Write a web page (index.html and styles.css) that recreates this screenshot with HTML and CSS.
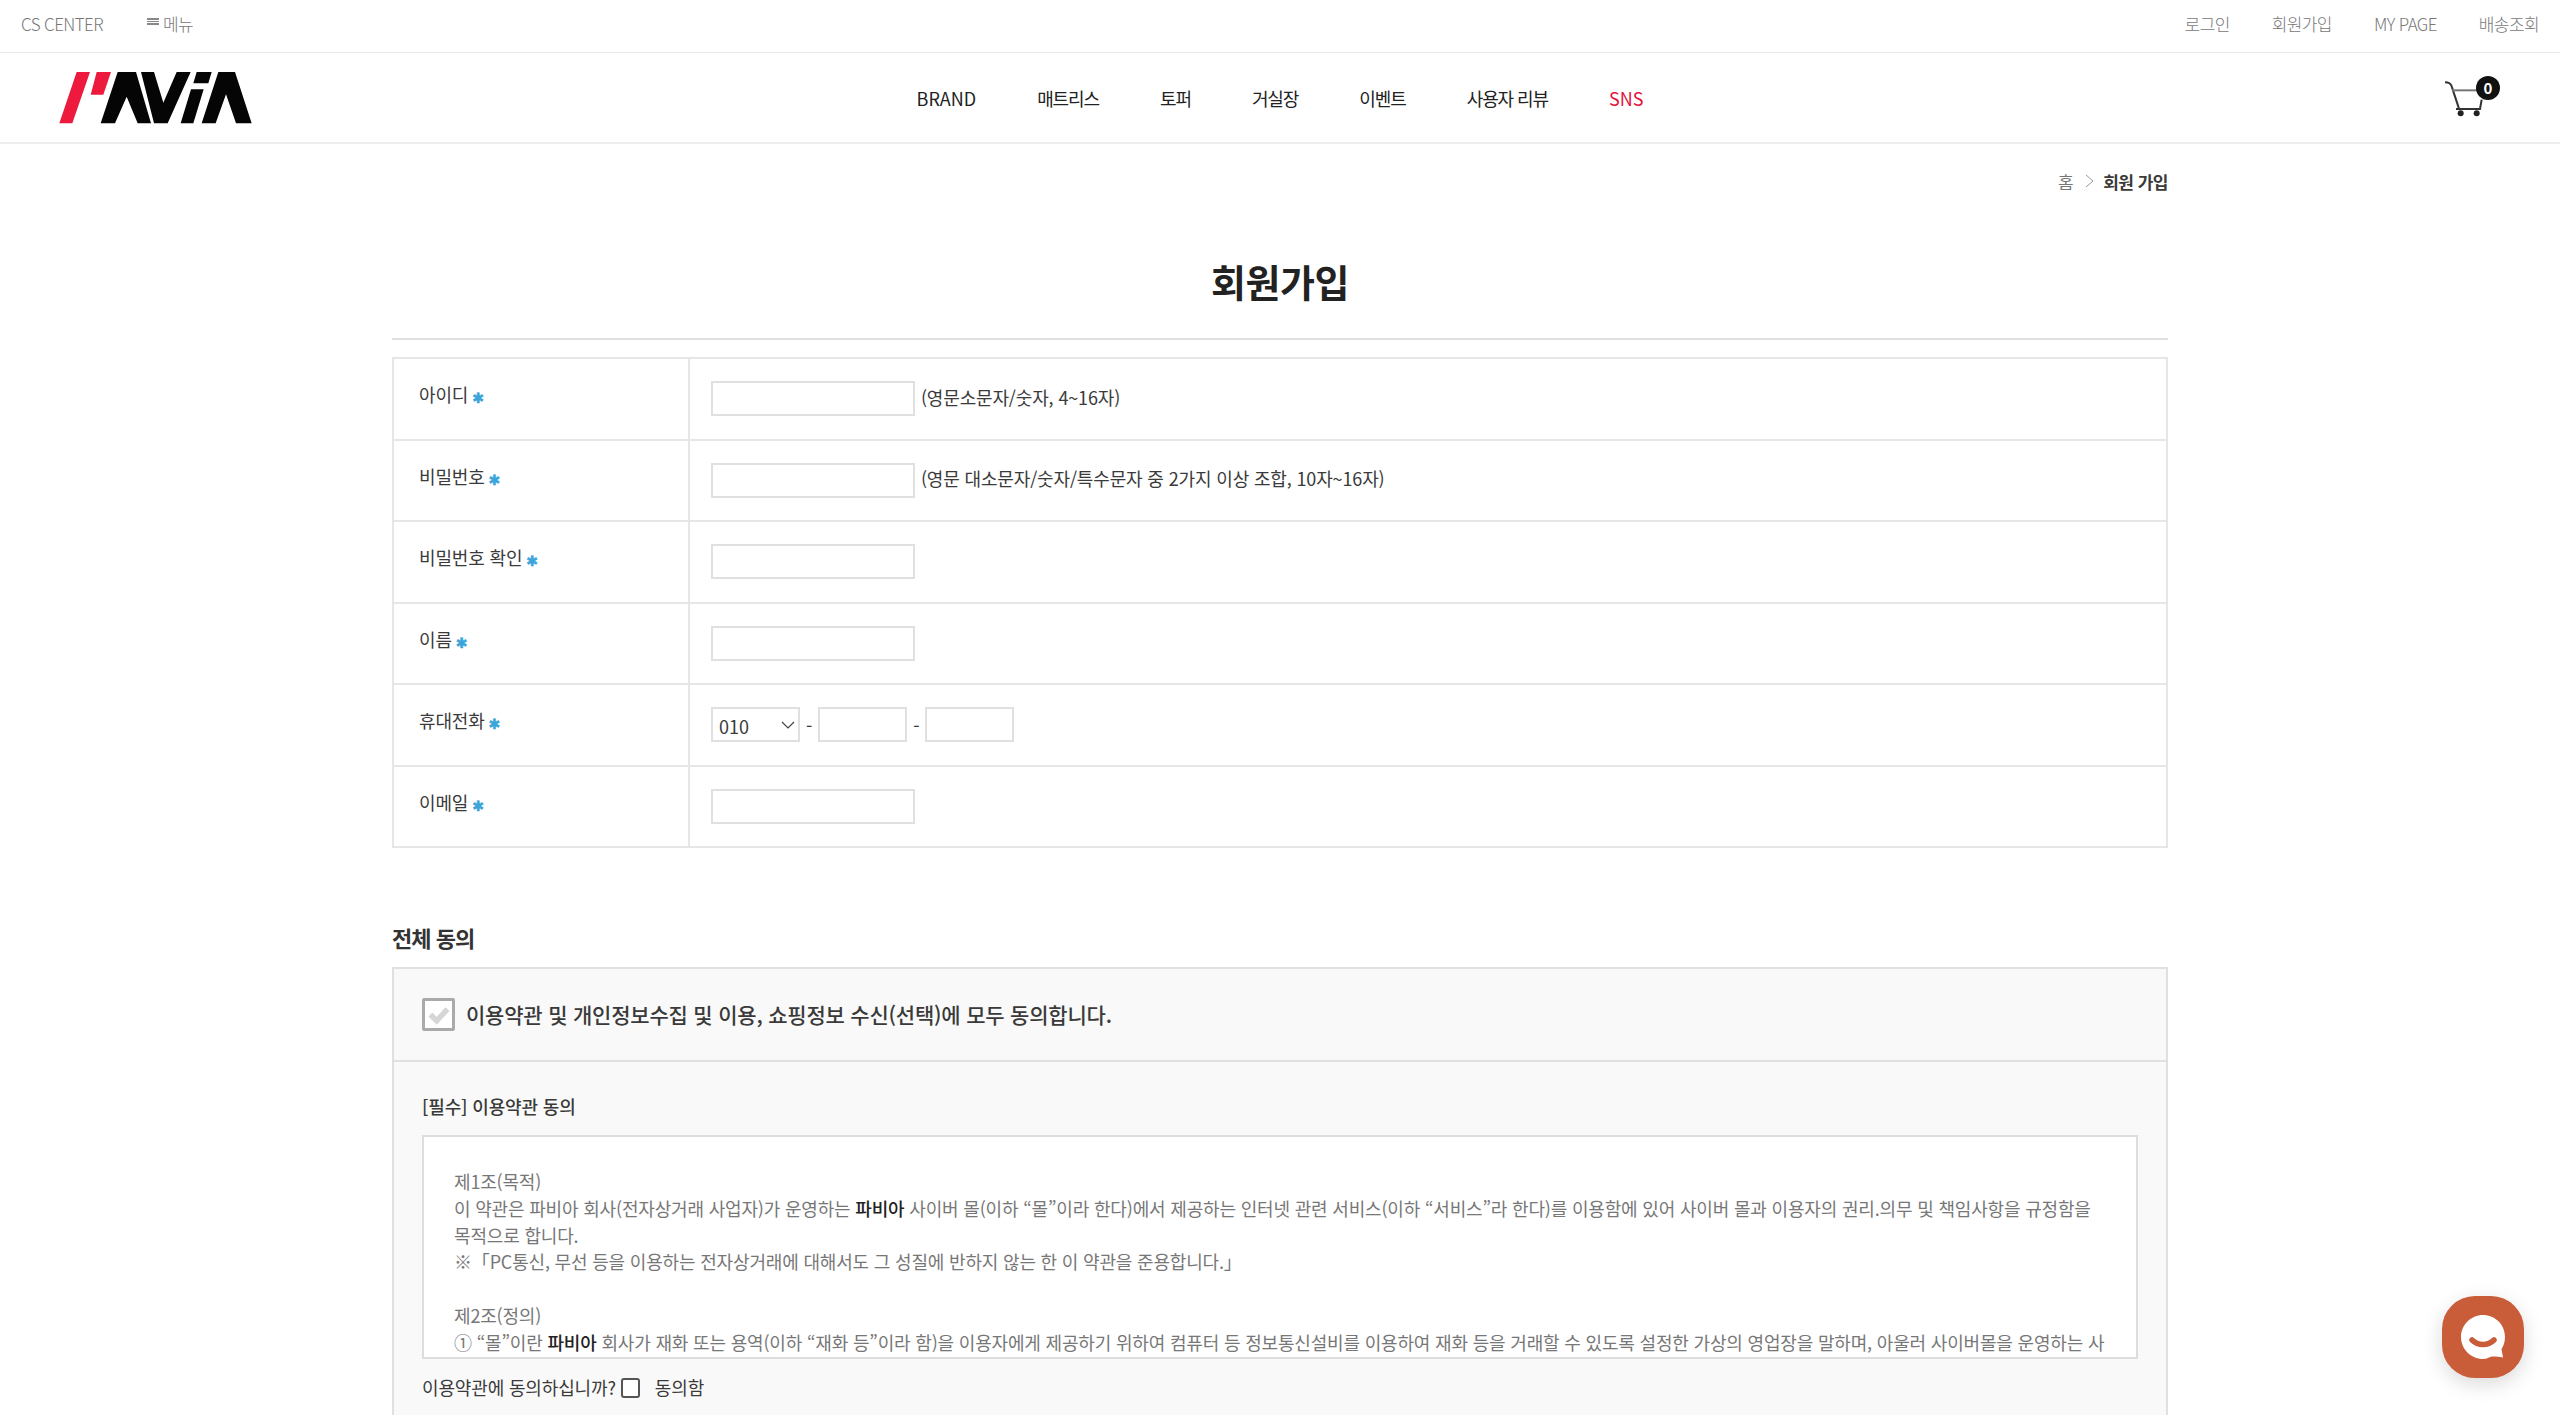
FILE: index.html
```html
<!DOCTYPE html>
<html lang="ko">
<head>
  <meta charset="UTF-8">
  <meta name="viewport" content="width=device-width, initial-scale=1.0">
  <link rel="stylesheet" href="styles.css">
  <title>회원 가입</title>
</head>
<body>
  <div class="page">
    <div class="top-bar">
      <div class="top-links">
        <a>CS CENTER</a>
        <a class="menu-link"><span class="menu-icon"></span>메뉴</a>
      </div>
      <div class="top-links top-links-right">
        <a>로그인</a>
        <a>회원가입</a>
        <a>MY PAGE</a>
        <a>배송조회</a>
      </div>
    </div>

    <header class="header">
      <svg class="logo" viewBox="0 0 600 192" width="200" height="64" aria-label="PAVIA">
        <path fill="#ed1a3d" d="M65 18H105L52 172H13ZM125 18H168L145 86H107Z"/>
        <path fill="#050505" d="M188 18H243L288 172H248L215 92L180 172H137ZM258 18H297L325 110L365 18H407L338 172H297ZM408 70H446L415 172H377ZM425 18H470L460 52H415ZM490 18H540L590 172H543L513 85L482 172H440Z"/>
      </svg>
      <nav class="nav">
        <a class="nav-latin">BRAND</a>
        <a>매트리스</a>
        <a>토퍼</a>
        <a>거실장</a>
        <a>이벤트</a>
        <a>사용자 리뷰</a>
        <a class="nav-latin nav-sns">SNS</a>
      </nav>
      <div class="cart">
        <svg viewBox="0 0 240 162" width="80" height="54">
          <g fill="none" stroke="#333" stroke-width="6">
            <path d="M45 40C56 40 62 42 65 52L88 122"/>
            <path stroke="#777" d="M66 64H148"/>
            <path d="M155 92L150 120H78"/>
          </g>
          <circle cx="92" cy="133" r="9" fill="#222"/>
          <circle cx="140" cy="133" r="9" fill="#222"/>
        </svg>
        <span class="cart-count">0</span>
      </div>
    </header>

    <main class="content">
      <div class="breadcrumb">
        <span>홈</span>
        <svg viewBox="0 0 10 14" width="10" height="14"><path d="M1 1L8 7L1 13" fill="none" stroke="#999" stroke-width="1"/></svg>
        <strong>회원 가입</strong>
      </div>

      <h1 class="page-title">회원가입</h1>

      <table class="join-table">
        <tr>
          <th>아이디 <span class="req">✱</span></th>
          <td><input type="text" class="field"> <span class="hint">(영문소문자/숫자, 4~16자)</span></td>
        </tr>
        <tr>
          <th>비밀번호 <span class="req">✱</span></th>
          <td><input type="password" class="field"> <span class="hint">(영문 대소문자/숫자/특수문자 중 2가지 이상 조합, 10자~16자)</span></td>
        </tr>
        <tr>
          <th>비밀번호 확인 <span class="req">✱</span></th>
          <td><input type="password" class="field"></td>
        </tr>
        <tr>
          <th>이름 <span class="req">✱</span></th>
          <td><input type="text" class="field"></td>
        </tr>
        <tr>
          <th>휴대전화 <span class="req">✱</span></th>
          <td>
            <div class="phone">
              <div class="select-wrap">
                <select class="phone-select"><option>010</option></select>
                <svg viewBox="0 0 14 8" width="14" height="8"><path d="M1 1L7 7L13 1" fill="none" stroke="#444" stroke-width="1.2"/></svg>
              </div>
              <span>-</span>
              <input type="text" class="field field-short">
              <span>-</span>
              <input type="text" class="field field-short">
            </div>
          </td>
        </tr>
        <tr>
          <th>이메일 <span class="req">✱</span></th>
          <td><input type="text" class="field"></td>
        </tr>
      </table>

      <h2 class="section-title">전체 동의</h2>

      <section class="agree-box">
        <div class="agree-all">
          <span class="big-check">
            <svg viewBox="0 0 30 30" width="29" height="29"><path d="M6 15L13 22L25 9" fill="none" stroke="#d6d6d6" stroke-width="6"/></svg>
          </span>
          <p>이용약관 및 개인정보수집 및 이용, 쇼핑정보 수신(선택)에 모두 동의합니다.</p>
        </div>
        <div class="agree-body">
          <h3>[필수] 이용약관 동의</h3>
          <div class="terms">
            제1조(목적)<br>
            이 약관은 파비아 회사(전자상거래 사업자)가 운영하는 <b>파비아</b> 사이버 몰(이하 “몰”이라 한다)에서 제공하는 인터넷 관련 서비스(이하 “서비스”라 한다)를 이용함에 있어 사이버 몰과 이용자의 권리.의무 및 책임사항을 규정함을<br>
            목적으로 합니다.<br>
            ※「PC통신, 무선 등을 이용하는 전자상거래에 대해서도 그 성질에 반하지 않는 한 이 약관을 준용합니다.」<br>
            <br>
            제2조(정의)<br>
            ① “몰”이란 <b>파비아</b> 회사가 재화 또는 용역(이하 “재화 등”이라 함)을 이용자에게 제공하기 위하여 컴퓨터 등 정보통신설비를 이용하여 재화 등을 거래할 수 있도록 설정한 가상의 영업장을 말하며, 아울러 사이버몰을 운영하는 사
          </div>
          <div class="agree-row">
            <span>이용약관에 동의하십니까?</span>
            <input type="checkbox" class="small-check" id="agree-terms">
            <label for="agree-terms">동의함</label>
          </div>
        </div>
      </section>
    </main>

    <button class="chat-button" aria-label="채팅">
      <svg viewBox="0 0 50 50" width="50" height="50">
        <path fill="#fff" d="M25 3C37 3 47 12.500 47 25C47 30 45.500 34 43.500 37L45 45.500C38 44.500 34 44 31 45.500C29 46.500 27 47 25 47C13 47 3 37 3 25C3 13 13 3 25 3Z"/>
        <path fill="none" stroke="#c95c39" stroke-width="5.500" stroke-linecap="round" d="M14 28C20 34 30 34 36 28"/>
      </svg>
    </button>
  </div>
</body>
</html>
```

FILE: styles.css
```css
:root {
  --color-line: #e6e6e6;
  --color-text: #3a3a3a;
  --color-grey: #777;
  --color-box: #f9f9f9;
  --color-blue: #3ba4d9;
}

* {
  margin: 0;
  padding: 0;
  box-sizing: border-box;
}

html, body {
  height: 100%;
  overflow: hidden;
}

body {
  background-color: #fff;
  color: var(--color-text);
  font-family: "Noto Sans CJK KR", "Noto Sans", sans-serif;
  font-size: 18px;
  letter-spacing: -0.15px;
}

.page {
  height: 100vh;
  overflow: hidden;
}

/* top bar */
.top-bar {
  display: flex;
  justify-content: space-between;
  align-items: center;
  height: 53px;
  padding: 0 21px 5px;
  border-bottom: 1px solid #e8e8e8;
  color: var(--color-grey);
  font-size: 17px;
  font-weight: 300;
  letter-spacing: -0.6px;
}

.top-links {
  display: flex;
  gap: 42px;
}

.menu-link {
  display: flex;
  align-items: center;
  gap: 4px;
  margin-left: 2px;
}

.menu-icon {
  width: 12px;
  height: 7px;
  margin-top: -5px;
  border-top: 2px solid #888;
  border-bottom: 2px solid #888;
  background: linear-gradient(#888, #888) center / 100% 1px no-repeat;
}

/* header */
.header {
  display: grid;
  grid-template-columns: 1fr auto 1fr;
  align-items: center;
  height: 91px;
  border-bottom: 2px solid #eee;
}

.logo {
  margin-left: 55px;
}

.nav {
  display: flex;
  gap: 61px;
  font-size: 18px;
  letter-spacing: -1.1px;
  color: #222;
}

.nav-latin {
  letter-spacing: 0;
}

.nav-sns {
  color: #e3143c;
}

.cart {
  position: relative;
  justify-self: end;
  width: 80px;
  height: 54px;
  margin-right: 50px;
  margin-top: -4px;
}

.cart-count {
  position: absolute;
  left: 46px;
  top: 7px;
  width: 24px;
  height: 24px;
  border-radius: 50%;
  background-color: #111;
  color: #fff;
  font-size: 15px;
  font-weight: 700;
  line-height: 24px;
  text-align: center;
  letter-spacing: 0;
}

/* content */
.content {
  width: 1776px;
  margin: 0 auto;
}

.breadcrumb {
  display: flex;
  justify-content: flex-end;
  align-items: center;
  gap: 12px;
  height: 30px;
  margin-top: 22px;
  color: var(--color-grey);
  font-size: 17px;
  letter-spacing: -0.5px;
}

.breadcrumb strong {
  margin-left: -4px;
  color: var(--color-text);
}

.page-title {
  height: 144px;
  margin-bottom: 17px;
  padding-top: 57px;
  border-bottom: 2px solid #e0e0e0;
  color: #222;
  font-size: 38px;
  font-weight: 700;
  line-height: 56px;
  text-align: center;
  letter-spacing: -0.5px;
}

.join-table {
  width: 100%;
  height: 491px;
  border-collapse: collapse;
  table-layout: fixed;
}

.join-table th,
.join-table td {
  border: 2px solid var(--color-line);
  vertical-align: middle;
}

.join-table th {
  width: 296px;
  padding: 0 0 9px 25px;
  font-weight: 400;
  text-align: left;
}

.join-table td {
  padding-left: 21px;
}

.req {
  margin-left: -1px;
  color: var(--color-blue);
  font-family: "DejaVu Sans", sans-serif;
  font-size: 14px;
  line-height: 1;
  vertical-align: -1px;
  letter-spacing: 0;
  -webkit-text-stroke: 0.5px var(--color-blue);
}

.field {
  width: 204px;
  height: 35px;
  border: 2px solid #e0e0e0;
  background-color: #fff;
  vertical-align: middle;
}

.hint {
  display: inline-block;
  margin: 0 0 4px 1px;
  vertical-align: middle;
}

.phone {
  display: flex;
  align-items: center;
  gap: 6px;
}

.field-short {
  width: 89px;
}

.select-wrap {
  position: relative;
}

.select-wrap svg {
  position: absolute;
  right: 5px;
  top: 14px;
}

.phone-select {
  display: block;
  width: 89px;
  height: 35px;
  padding: 3px 0 0 6px;
  border: 2px solid #e0e0e0;
  border-radius: 0;
  background-color: #fff;
  appearance: none;
  color: var(--color-text);
  font-family: inherit;
  font-size: 18px;
}

.section-title {
  margin-top: 71px;
  height: 48px;
  color: #333;
  font-size: 22px;
  font-weight: 700;
  line-height: 36px;
  letter-spacing: -1px;
}

.agree-box {
  height: 500px;
  border: 2px solid #e0e0e0;
  background-color: var(--color-box);
}

.agree-all {
  display: flex;
  align-items: center;
  gap: 11px;
  height: 93px;
  padding-left: 28px;
  border-bottom: 2px solid #e0e0e0;
  font-size: 21px;
  font-weight: 500;
  letter-spacing: -0.2px;
}

.agree-all p {
  margin-bottom: 2px;
}

.big-check {
  display: flex;
  align-items: center;
  justify-content: center;
  width: 33px;
  height: 33px;
  border: 3px solid #aaa;
  border-radius: 2px;
  background-color: #fff;
}

.agree-body {
  padding: 0 28px;
}

.agree-body h3 {
  margin-top: 29px;
  height: 44px;
  font-size: 18px;
  font-weight: 500;
  line-height: 30px;
}

.terms {
  height: 224px;
  padding: 31px 30px 0;
  overflow: hidden;
  border: 2px solid #ddd;
  background-color: #fff;
  color: var(--color-grey);
  font-size: 18px;
  line-height: 26.800px;
  white-space: nowrap;
  letter-spacing: -0.18px;
}

.terms b {
  color: #222;
  font-weight: 500;
}

.agree-row {
  display: flex;
  align-items: center;
  margin-top: 14px;
  height: 28px;
}

.small-check {
  width: 19px;
  height: 20px;
  margin: 2px 15px 0 5px;
  border: 2px solid #555;
  border-radius: 3px;
  appearance: none;
  background-color: #fff;
}

.chat-button {
  position: fixed;
  right: 36px;
  bottom: 37px;
  display: flex;
  align-items: center;
  justify-content: center;
  width: 82px;
  height: 82px;
  border: none;
  border-radius: 33px;
  background-color: #c95c39;
  box-shadow: 0 6px 20px rgba(0, 0, 0, 0.15);
}
```
